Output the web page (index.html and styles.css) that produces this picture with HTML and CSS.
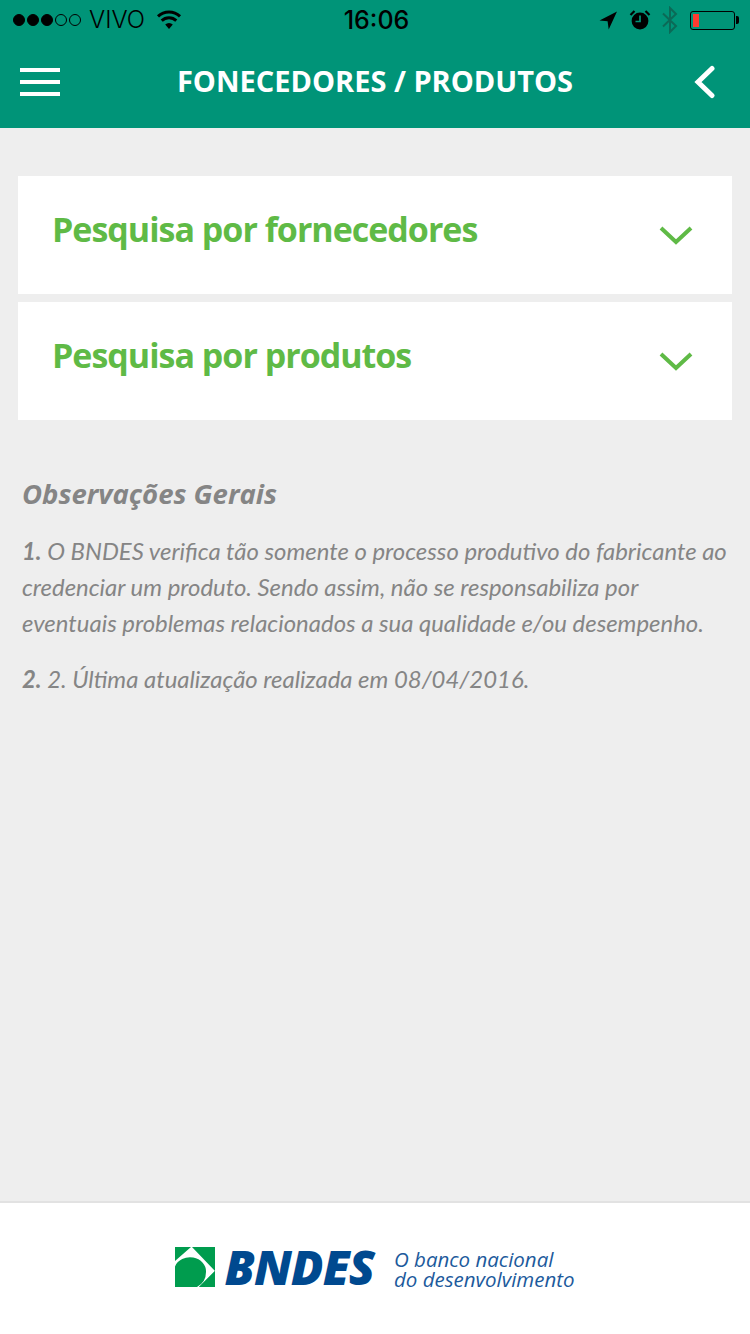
FILE: index.html
```html
<!DOCTYPE html>
<html lang="pt-BR">
<head>
<meta charset="utf-8">
<title>Fornecedores / Produtos</title>
<link rel="stylesheet" href="styles.css">
</head>
<body>
<div class="page">
  <header class="top">
    <div class="status">
      <div class="status-side">
        <span class="signal"><i class="on"></i><i class="on"></i><i class="on"></i><i></i><i></i></span>
        <span class="carrier">VIVO</span>
        <svg class="wifi" width="26" height="20" viewBox="0 0 26 20"><path d="M13 19 9.200 14.600a5.500 5.500 0 0 1 7.600 0z" fill="#000"/><path d="M5.700 10.600a10.500 10.500 0 0 1 14.600 0M2 6.400a16 16 0 0 1 22 0" fill="none" stroke="#000" stroke-width="3"/></svg>
      </div>
      <div class="clock">16:06</div>
      <div class="status-side status-right">
        <svg class="loc" width="20" height="20" viewBox="0 0 20 20"><path d="M19 1.500 1.500 10.600l8.100 0.600 1.100 8.300z" fill="#000"/></svg>
        <svg class="alarm" width="22" height="22" viewBox="0 0 22 22"><circle cx="11" cy="12" r="8.400" fill="#000"/><path d="M11 6.500V12.500H6.500" fill="none" stroke="#009478" stroke-width="1.700"/><path d="M1.500 6 5.500 2M20.500 6 16.500 2" stroke="#000" stroke-width="2.200" fill="none"/></svg>
        <svg class="bt" width="18" height="28" viewBox="0 0 18 28"><path d="M2 7.500 15 20 9 26V2l6 6L2 20.500" fill="none" stroke="#0b6a57" stroke-width="2"/></svg>
        <span class="battery"><span class="battery-level"></span></span>
      </div>
    </div>
    <nav class="nav">
      <span class="menu"><i></i><i></i><i></i></span>
      <h1 class="title">FONECEDORES / PRODUTOS</h1>
      <svg class="back" width="24" height="34" viewBox="0 0 24 34"><path d="M19 3.500 5 17l14 13.500" fill="none" stroke="#fff" stroke-width="5" stroke-linecap="round"/></svg>
    </nav>
  </header>

  <main class="content">
    <section class="card">
      <h2 class="card-title">Pesquisa por fornecedores</h2>
      <svg class="chev" width="34" height="20" viewBox="0 0 34 20"><path d="M2 3 17 17 32 3" fill="none" stroke="#5fba46" stroke-width="4"/></svg>
    </section>
    <section class="card">
      <h2 class="card-title">Pesquisa por produtos</h2>
      <svg class="chev" width="34" height="20" viewBox="0 0 34 20"><path d="M2 3 17 17 32 3" fill="none" stroke="#5fba46" stroke-width="4"/></svg>
    </section>
    <section class="notes">
      <h3 class="notes-title">Observações Gerais</h3>
      <p class="note"><b>1.</b> O BNDES verifica tão somente o processo produtivo do fabricante ao credenciar um produto. Sendo assim, não se responsabiliza por eventuais problemas relacionados a sua qualidade e/ou desempenho.</p>
      <p class="note"><b>2.</b> 2. Última atualização realizada em 08/04/2016.</p>
    </section>
  </main>

  <footer class="foot">
    <div class="logo">
      <svg class="mark" width="40" height="40" viewBox="0 0 40 40">
        <rect width="40" height="40" fill="#009c4e"/>
        <path d="M0 14 16 0h1L40 24 24 40h-2a17 17 0 0 0 9-15A16 14 0 0 0 0 19.500z" fill="#fff"/>
        <path d="M40 24v16H24z" fill="#009c4e"/>
      </svg>
      <span class="bndes">BNDES</span>
      <span class="slogan">O banco nacional<br>do desenvolvimento</span>
    </div>
  </footer>
</div>
</body>
</html>
```
FILE: styles.css
```css
* { box-sizing: border-box; }
html, body { margin: 0; padding: 0; }
body { font-family: "Open Sans", "Noto Sans", sans-serif; background: #eeeeee; }
.page { width: 750px; height: 1334px; display: flex; flex-direction: column; overflow: hidden; }

.top { height: 128px; background: #009478; flex: none; }
.status { height: 40px; display: flex; align-items: center; justify-content: space-between; padding: 0 12px 0 13px; position: relative; color: #000; }
.status-side { display: flex; align-items: center; width: 200px; }
.status-right { justify-content: flex-end; }
.signal { display: flex; gap: 2px; }
.signal i { width: 12px; height: 12px; border-radius: 50%; border: 1px solid #000; }
.signal i.on { background: #000; }
.carrier { font-family: "Inter", sans-serif; font-weight: 300; font-size: 24px; margin-left: 8px; line-height: 40px; }
.wifi { margin-left: 11px; margin-bottom: 1px; }
.clock { font-family: "Inter", sans-serif; font-weight: 500; font-size: 25px; line-height: 42px; position: absolute; left: 3px; right: 0; text-align: center; }
.loc { margin-right: 11px; }
.alarm { margin-right: 10px; }
.bt { margin-right: 11px; }
.battery { width: 45px; height: 19px; border: 1.500px solid #000; border-radius: 3px; padding: 2px; display: block; position: relative; margin-right: 3px; }
.battery::after { content: ""; position: absolute; right: -5px; top: 4px; width: 3px; height: 8px; background: #000; border-radius: 0 2px 2px 0; }
.battery-level { display: block; width: 6px; height: 100%; background: #ff3b30; }

.nav { height: 88px; display: flex; align-items: center; justify-content: space-between; padding: 0 33px 4px 20px; position: relative; }
.menu { width: 40px; display: flex; flex-direction: column; gap: 8px; }
.menu i { display: block; height: 4px; background: #fff; }
.title { position: absolute; left: 0; right: 0; top: 20px; margin: 0; text-align: center; color: #fff; font-size: 29px; font-weight: 700; line-height: 42px; }
.back { display: block; }

.content { flex: 1; padding: 48px 18px 0; display: flex; flex-direction: column; gap: 8px; }
.card { height: 118px; background: #fff; display: flex; justify-content: space-between; align-items: center; padding: 0 39px 0 34px; }
.card-title { margin: 0 0 12px; font-size: 34px; font-weight: 700; color: #5fba46; letter-spacing: -1px; line-height: 48px; }
.chev { display: block; }

.notes { padding: 46px 0 0 4px; color: #858585; font-style: italic; }
.notes-title { margin: 0 0 19px; font-size: 27.500px; line-height: 40px; font-weight: 700; }
.note { margin: 0 0 20px; font-family: "Lato", sans-serif; font-size: 23.900px; line-height: 36px; }
.note b { font-weight: 700; }

.foot { height: 133px; flex: none; background: #fff; border-top: 2px solid #e2e2e2; display: flex; justify-content: center; padding-top: 44px; }
.logo { display: flex; align-items: center; height: 40px; }
.mark { display: block; }
.bndes { font-size: 48px; font-weight: 800; font-style: italic; color: #00498f; margin-left: 9px; letter-spacing: -1px; line-height: 40px; }
.slogan { font-size: 20.500px; line-height: 20px; font-style: italic; color: #1c5a9c; margin: 4px 0 0 20px; }
```
